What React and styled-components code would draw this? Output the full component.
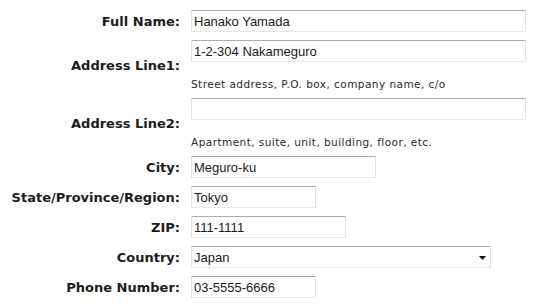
import styled, { createGlobalStyle } from "styled-components";

const GlobalStyle = createGlobalStyle`
  body {
    margin: 0;
    background: #ffffff;
  }
`;

const Form = styled.form`
  display: flex;
  flex-direction: column;
  gap: 8px;
  padding-top: 10px;
`;

const Row = styled.div`
  display: flex;
  align-items: center;
  gap: 11px;
`;

const Label = styled.label`
  width: 180px;
  flex: none;
  text-align: right;
  font-family: "DejaVu Sans", Verdana, sans-serif;
  font-weight: bold;
  font-size: 13px;
  color: #1c1c1c;
  white-space: nowrap;
`;

const Field = styled.div`
  display: flex;
  flex-direction: column;
  position: relative;
`;

const TextInput = styled.input`
  box-sizing: border-box;
  width: ${(p) => p.$w}px;
  height: 22px;
  margin: 0;
  padding: 0 2px;
  border: 1px solid #e2e3ea;
  border-top-color: #abadb3;
  border-bottom-color: #e3e9ef;
  background: #fff;
  font-family: "Liberation Sans", Arial, sans-serif;
  font-size: 13px;
  color: #1a1a1a;
  outline: none;
`;

const Select = styled.select`
  box-sizing: border-box;
  width: ${(p) => p.$w}px;
  height: 22px;
  margin: 0;
  padding: 0 2px;
  appearance: none;
  border: 1px solid #e2e3ea;
  border-top-color: #abadb3;
  border-bottom-color: #e3e9ef;
  border-radius: 0;
  background: #fff;
  font-family: "Liberation Sans", Arial, sans-serif;
  font-size: 13px;
  color: #1a1a1a;
  outline: none;
`;

const Arrow = styled.svg`
  position: absolute;
  right: 5px;
  top: 10px;
  pointer-events: none;
`;

const Hint = styled.div`
  margin-top: 17px;
  font-family: "DejaVu Sans", Verdana, sans-serif;
  font-size: 10.5px;
  letter-spacing: 0.45px;
  line-height: 11px;
  color: #2a2a2a;
  white-space: nowrap;
`;

export default function App() {
  return (
    <>
      <GlobalStyle />
      <Form>
        <Row>
          <Label>Full Name:</Label>
          <Field>
            <TextInput $w={335} defaultValue="Hanako Yamada" />
          </Field>
        </Row>
        <Row>
          <Label>Address Line1:</Label>
          <Field>
            <TextInput $w={335} defaultValue="1-2-304 Nakameguro" />
            <Hint>Street address, P.O. box, company name, c/o</Hint>
          </Field>
        </Row>
        <Row>
          <Label>Address Line2:</Label>
          <Field>
            <TextInput $w={335} defaultValue="" />
            <Hint>Apartment, suite, unit, building, floor, etc.</Hint>
          </Field>
        </Row>
        <Row>
          <Label>City:</Label>
          <Field>
            <TextInput $w={185} defaultValue="Meguro-ku" />
          </Field>
        </Row>
        <Row>
          <Label>State/Province/Region:</Label>
          <Field>
            <TextInput $w={125} defaultValue="Tokyo" />
          </Field>
        </Row>
        <Row>
          <Label>ZIP:</Label>
          <Field>
            <TextInput $w={155} defaultValue="111-1111" />
          </Field>
        </Row>
        <Row>
          <Label>Country:</Label>
          <Field>
            <Select $w={300} defaultValue="Japan">
              <option>Japan</option>
            </Select>
            <Arrow width="7" height="4" viewBox="0 0 7 4">
              <path d="M0 0h7L3.5 4z" fill="#111" />
            </Arrow>
          </Field>
        </Row>
        <Row>
          <Label>Phone Number:</Label>
          <Field>
            <TextInput $w={125} defaultValue="03-5555-6666" />
          </Field>
        </Row>
      </Form>
    </>
  );
}
